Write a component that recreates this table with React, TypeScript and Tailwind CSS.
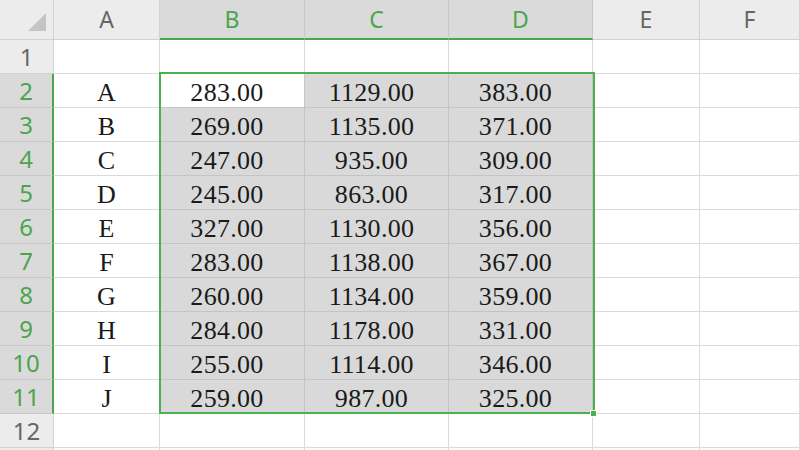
import React from "react";

const data: [string, string, string, string][] = [
  ["A", "283.00", "1129.00", "383.00"],
  ["B", "269.00", "1135.00", "371.00"],
  ["C", "247.00", "935.00", "309.00"],
  ["D", "245.00", "863.00", "317.00"],
  ["E", "327.00", "1130.00", "356.00"],
  ["F", "283.00", "1138.00", "367.00"],
  ["G", "260.00", "1134.00", "359.00"],
  ["H", "284.00", "1178.00", "331.00"],
  ["I", "255.00", "1114.00", "346.00"],
  ["J", "259.00", "987.00", "325.00"],
];

const cols = ["A", "B", "C", "D", "E", "F"];
const sans = { fontFamily: '"Noto Sans", "Liberation Sans", sans-serif' };
const serif = { fontFamily: '"Liberation Serif", "DejaVu Serif", serif' };

export default function App() {
  const rows = Array.from({ length: 13 }, (_, i) => i + 1);
  return (
    <div className="relative w-[800px] h-[450px] overflow-hidden bg-white">
      <div className="grid grid-cols-[54px_106px_145px_144px_144px_107px_100px] grid-rows-[40px_repeat(13,34px)]">
        {/* corner */}
        <div className="relative bg-[#ececec] border-r border-b border-[#d2d2d2]">
          <svg className="absolute left-[28px] top-[13px]" width="18" height="18" viewBox="0 0 18 18">
            <polygon points="18,0 18,18 0,18" fill="#c4c4c4" />
          </svg>
        </div>
        {cols.map((c, i) => {
          const sel = i >= 1 && i <= 3;
          return (
            <div
              key={c}
              style={sans}
              className={
                "flex items-center justify-center text-[23px] border-r " +
                (sel
                  ? "bg-[#dadada] text-[#4ca54c] border-r-[#c8c8c8] border-b-2 border-b-[#4ca54c]"
                  : "bg-[#ececec] text-[#666666] border-r-[#d2d2d2] border-b border-b-[#d2d2d2]")
              }
            >
              {c}
            </div>
          );
        })}
        {rows.map((r) => {
          const selRow = r >= 2 && r <= 11;
          const d = selRow ? data[r - 2] : null;
          return (
            <React.Fragment key={r}>
              <div
                style={sans}
                className={
                  "flex items-center justify-center text-[24px] border-b " +
                  (selRow
                    ? "bg-[#dadada] text-[#4ca54c] border-b-[#c8c8c8] border-r-2 border-r-[#4ca54c]"
                    : "bg-[#ececec] text-[#666666] border-b-[#d2d2d2] border-r border-r-[#d2d2d2]")
                }
              >
                {r <= 12 ? r : ""}
              </div>
              <div
                style={serif}
                className="flex items-center justify-center pt-[3px] text-[26px] text-[#1a1a1a] bg-white border-r border-b border-[#dadada]"
              >
                {d ? d[0] : ""}
              </div>
              {[1, 2, 3].map((k) => {
                const active = r === 2 && k === 1;
                return (
                  <div
                    key={k}
                    style={serif}
                    className={
                      "flex items-center justify-center pt-[3px] pr-[10px] text-[26px] tracking-[0.3px] text-[#1a1a1a] border-r border-b " +
                      (selRow
                        ? active
                          ? "bg-white border-[#c8c8c8]"
                          : "bg-[#d9d9d9] border-[#c4c4c4]"
                        : "bg-white border-[#dadada]")
                    }
                  >
                    {d ? d[k] : ""}
                  </div>
                );
              })}
              <div className="bg-white border-r border-b border-[#dadada]" />
              <div className="bg-white border-r border-b border-[#dadada]" />
            </React.Fragment>
          );
        })}
      </div>
      {/* selection outline */}
      <div className="pointer-events-none absolute left-[159px] top-[72px] w-[436px] h-[342px] border-2 border-[#4caf50]" />
      <div className="pointer-events-none absolute left-[590px] top-[410px] w-[7px] h-[7px] bg-[#4caf50] border border-white" />
    </div>
  );
}
